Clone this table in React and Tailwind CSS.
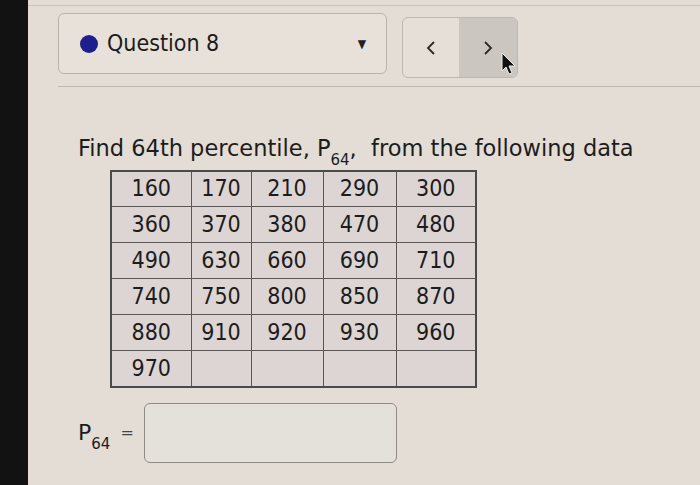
import React from "react";

const rows = [
  ["160", "170", "210", "290", "300"],
  ["360", "370", "380", "470", "480"],
  ["490", "630", "660", "690", "710"],
  ["740", "750", "800", "850", "870"],
  ["880", "910", "920", "930", "960"],
  ["970", "", "", "", ""],
];

const colWidths = ["w-[80px]", "w-[60px]", "w-[72px]", "w-[73px]", "w-[80px]"];

const Chevron = ({ dir }) => (
  <svg width="10" height="16" viewBox="0 0 10 16">
    <path
      d={dir === "left" ? "M8 2 L2 8 L8 14" : "M2 2 L8 8 L2 14"}
      fill="none"
      stroke="#2a2a2a"
      strokeWidth="1.8"
    />
  </svg>
);

export default function App() {
  return (
    <div
      className="w-[700px] h-[485px] flex bg-[#e3ddd6] text-[#1c1c1c] overflow-hidden"
      style={{ fontFamily: '"DejaVu Sans", sans-serif' }}
    >
      {/* dark bezel */}
      <div className="w-[28px] h-full bg-[#121212]" />

      <div className="flex-1 flex flex-col items-start pt-[5px]">
        <div className="self-stretch border-t border-[#c9c3bc]" />

        {/* header */}
        <div className="flex items-start pl-[30px] pt-[7px]">
          <div
            className="w-[329px] h-[61px] rounded-md border border-[#b9b3ad] bg-[#e7e1da] flex items-center pl-[21px] pr-[20px]"
            style={{ fontFamily: '"DejaVu Sans Condensed", "DejaVu Sans", sans-serif' }}
          >
            <span className="w-[18px] h-[18px] rounded-full bg-[#1d1f8c] mr-[9px]" />
            <span className="text-[23px]">Question 8</span>
            <span className="ml-auto text-[12px] text-[#222]">▼</span>
          </div>
          <div className="ml-[15px] mt-[4px] w-[116px] h-[61px] rounded-md border border-[#bdb7b0] bg-[#e5dfd8] flex overflow-hidden">
            <div className="w-[56px] flex items-center justify-center">
              <Chevron dir="left" />
            </div>
            <div className="flex-1 bg-[#cbc6c0] flex items-center justify-center relative">
              <Chevron dir="right" />
              <svg className="absolute left-[42px] top-[34px]" width="16" height="24" viewBox="0 0 16 24">
                <path d="M1 1 L1 19 L5 15 L8 22 L11 21 L8 14 L14 14 Z" fill="#111" stroke="#eee" strokeWidth="1" />
              </svg>
            </div>
          </div>
        </div>

        <div className="mt-[8px] ml-[30px] self-stretch border-t border-[#bdb7b0]" />

        {/* question */}
        <div className="pl-[50px] mt-[50px] text-[22.5px] leading-none">
          Find 64th percentile, P<sub className="text-[15px] align-[-5px]">64</sub>,&nbsp; from the following data
        </div>

        <table
          className="ml-[82px] mt-[10px] table-fixed border-collapse border-2 border-[#4a4a4a] bg-[#dcd5d4] text-[23px]"
          style={{ fontFamily: '"DejaVu Sans Condensed", "DejaVu Sans", sans-serif' }}
        >
          <tbody>
            {rows.map((row, i) => (
              <tr key={i} className="h-[36px]">
                {row.map((v, j) => (
                  <td
                    key={j}
                    className={`${colWidths[j]} border border-[#5a5656] text-center leading-none`}
                  >
                    {v}
                  </td>
                ))}
              </tr>
            ))}
          </tbody>
        </table>

        {/* answer */}
        <div className="flex items-center pl-[50px] mt-[15px]">
          <span className="text-[22px]">
            P<sub className="text-[15px] align-[-5px]">64</sub>
          </span>
          <span className="ml-[10px] text-[16px] text-[#444]">=</span>
          <div className="ml-[10px] w-[253px] h-[60px] rounded-md border border-[#8f8a86] bg-[#e4e0da]" />
        </div>
      </div>
    </div>
  );
}
